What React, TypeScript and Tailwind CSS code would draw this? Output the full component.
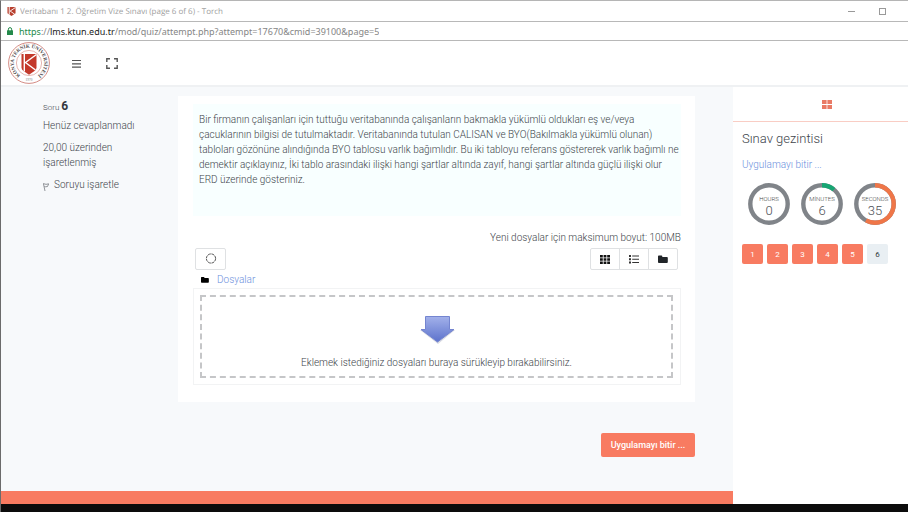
import type { ReactNode } from "react";

const QUESTIONS = [1, 2, 3, 4, 5, 6];

function Shield({ className }: { className: string }) {
  return (
    <svg viewBox="0 0 20 20" className={className} aria-hidden="true">
      <path d="M1 0h18v14l-9 6-9-6z" fill="#b8402f" />
      <path d="M5 0v17M19 1 7 9l10 7" stroke="#fff" strokeWidth="2" fill="none" />
    </svg>
  );
}

function UniversityLogo() {
  return (
    <svg viewBox="0 0 44 44" className="size-11" role="img" aria-label="Konya Teknik Üniversitesi">
      <circle cx="22" cy="22" r="20.4" fill="#fff" stroke="#d58d86" strokeWidth="1" />
      <circle cx="22" cy="22" r="12.6" fill="none" stroke="#dfa29c" strokeWidth="0.8" />
      <defs>
        <path id="seal-inner" d="M13.500 34.600A15.200 15.200 0 1 1 30.500 34.600" />
      </defs>
      <text fontSize="5" fontWeight="700" fill="#4c4648" fontFamily="Liberation Serif, serif">
        <textPath href="#seal-inner" startOffset="50%" textAnchor="middle">
          KONYA TEKNİK ÜNİVERSİTESİ
        </textPath>
      </text>
      <text x="22" y="40" fontSize="3.4" textAnchor="middle" fill="#777" fontFamily="Liberation Serif, serif">
        1970
      </text>
      <path d="M14.500 13h15v13.500q0 2.200-2 3.600l-5.500 3.600-5.500-3.600q-2-1.400-2-3.600z" fill="#c3392b" />
      <path d="M17.300 13v17.500M29.500 13.500 18.500 21.500 28.500 29" stroke="#fff" strokeWidth="1.400" fill="none" />
    </svg>
  );
}

function Folder({ className }: { className: string }) {
  return (
    <svg viewBox="0 0 10 9" className={className} fill="currentColor" aria-hidden="true">
      <path d="M0 1.400Q0 .6.8.6h2.700q.8 0 .8.800v.5h4.600q.9 0 .9.900v4.300q0 .9-.9.900H.9Q0 8 0 7.100z" />
    </svg>
  );
}

function Dial({ label, value, share, color }: { label: string; value: number; share: number; color: string }) {
  return (
    <svg viewBox="0 0 42 42" className="size-[42px]" role="img" aria-label={`${value} ${label}`}>
      <circle cx="21" cy="21" r="18.700" fill="none" stroke="#808489" strokeWidth="4.400" />
      <circle
        cx="21"
        cy="21"
        r="18.700"
        fill="none"
        stroke={color}
        strokeWidth="4.400"
        pathLength="100"
        strokeDasharray={`${share} 100`}
        transform="rotate(-90 21 21)"
      />
      <text x="21" y="18" fontSize="6" textAnchor="middle" fill="#444">
        {label}
      </text>
      <text x="21" y="32" fontSize="13" textAnchor="middle" fill="#4c5056">
        {value}
      </text>
    </svg>
  );
}

function ViewButton({ label, children }: { label: string; children: ReactNode }) {
  return (
    <button
      aria-label={label}
      className="flex h-[22px] w-[30px] -ml-px items-center justify-center border border-[#dfe1e3] bg-white text-[#212529] first:rounded-l-xs last:rounded-r-xs"
    >
      {children}
    </button>
  );
}

export default function App() {
  return (
    <div className="flex min-h-screen flex-col border-t border-l border-t-[#b5b5b5] border-l-[#6b6b6b] bg-white font-['Roboto',sans-serif] text-[10px] leading-[15px] font-light text-[#40454b]">
      <div className="flex h-5 items-center border-b border-[#b8b8b8] pr-[22px] pl-1.5 box-content font-['Open_Sans',sans-serif] text-[8px] font-normal text-[#a0a0a0] [text-rendering:geometricPrecision]">
        <Shield className="mr-1 size-[9px]" />
        <span className="flex-1 truncate">Veritabanı 1 2. Öğretim Vize Sınavı (page 6 of 6) - Torch</span>
        <button aria-label="Simge durumuna küçült" className="mr-6 flex size-[7px] items-center">
          <span className="w-full border-t border-[#999]" />
        </button>
        <button aria-label="Ekranı kapla" className="size-[7px] border border-[#999]" />
      </div>

      <div className="box-content flex h-[18px] items-center border-b border-[#b8b8b8] pl-1.5 font-['Noto_Sans',sans-serif] text-[9px] font-normal text-[#858585]">
        <svg viewBox="0 0 6 8" className="mr-1.5 h-2 w-1.5" aria-hidden="true">
          <path d="M1.400 4V2.200a1.600 1.600 0 0 1 3.200 0V4" fill="none" stroke="#248a4b" strokeWidth="1" />
          <path d="M0 3.300h6V8H0z" fill="#248a4b" />
        </svg>
        <span className="truncate">
          <span className="text-[#248a4b]">https</span>://<span className="text-[#222]">lms.ktun.edu.tr</span>
          /mod/quiz/attempt.php?attempt=17670&amp;cmid=39100&amp;page=5
        </span>
      </div>

      <header className="flex h-[46px] items-center border-b-2 border-[#eff1f3] pl-1.5">
        <UniversityLogo />
        <button aria-label="Menü" className="ml-[21px]">
          <svg viewBox="0 0 9 9" className="size-[9px]" stroke="#555" strokeWidth="1.200" aria-hidden="true">
            <path d="M0 1.500h9M0 4.800h9M0 8.100h9" />
          </svg>
        </button>
        <button aria-label="Tam ekran" className="ml-[25px]">
          <svg viewBox="0 0 12 11" className="h-[11px] w-3" fill="none" stroke="#555" strokeWidth="1.400" aria-hidden="true">
            <path d="M4 .8H.8V4M8 .8h3.200V4M.8 7v3.200H4M11.200 7v3.200H8" />
          </svg>
        </button>
      </header>

      <div className="flex flex-1">
        <div className="flex min-w-0 flex-1 flex-col bg-[#f7f9fb]">
          <main className="flex flex-1 flex-col pt-[9px] pr-[38px] pl-[42px]">
            <div className="flex items-start">
              <section className="w-[135px] shrink-0 pt-[3px]">
                <h3 className="text-[8px]">
                  Soru <span className="text-[12px] font-bold text-[#343a40]">6</span>
                </h3>
                <p className="mt-[3px]">Henüz cevaplanmadı</p>
                <p className="mt-[7px] w-24">20,00 üzerinden işaretlenmiş</p>
                <button className="mt-[7px] flex items-center">
                  <svg viewBox="0 0 6 8" className="mt-1 mr-[5px] h-2 w-1.5" fill="none" stroke="#777b80" strokeWidth=".8" aria-hidden="true">
                    <path d="M.4.500 2 8M.4.600Q3 2 5.700.800L4.500 3.500Q2.500 4 1.300 3.600" />
                  </svg>
                  Soruyu işaretle
                </button>
              </section>

              <section className="min-w-0 flex-1 bg-white pt-2 pr-3.5 pb-[17px] pl-[15px]">
                <div className="min-h-28 bg-[#f8ffff] pt-2 pl-1.5">
                  <p>
                    Bir firmanın çalışanları için tuttuğu veritabanında çalışanların bakmakla yükümlü oldukları eş
                    ve/veya çacuklarının bilgisi de tutulmaktadır. Veritabanında tutulan CALISAN ve BYO(Bakılmakla
                    yükümlü olunan) tabloları gözönüne alındığında BYO tablosu varlık bağımlıdır. Bu iki tabloyu
                    referans göstererek varlık bağımlı ne demektir açıklayınız, İki tablo arasındaki ilişki hangi
                    şartlar altında zayıf, hangi şartlar altında güçlü ilişki olur ERD üzerinde gösteriniz.
                  </p>
                </div>
                <p className="mt-3.5 text-right">Yeni dosyalar için maksimum boyut: 100MB</p>
                <div className="mt-[3px] flex justify-between pr-[3px] pl-0.5">
                  <button
                    aria-label="Yenile"
                    className="flex h-[22px] w-[31px] items-center justify-center rounded-xs border border-[#dfe1e3] bg-white"
                  >
                    <svg viewBox="0 0 12 12" className="size-3" fill="none" stroke="#444" aria-hidden="true">
                      <circle cx="6" cy="5.500" r="4.600" strokeWidth=".9" strokeDasharray="2.900 .7" />
                    </svg>
                  </button>
                  <div className="flex">
                    <ViewButton label="Simgeler">
                      <svg viewBox="0 0 10 9" className="h-[9px] w-2.5" fill="#111" aria-hidden="true">
                        <path d="M0 0h2.800v2.500H0zM3.600 0h2.800v2.500H3.600zM7.200 0H10v2.500H7.200zM0 3.200h2.800v2.500H0zM3.600 3.200h2.800v2.500H3.600zM7.200 3.200H10v2.500H7.200zM0 6.400h2.800v2.500H0zM3.600 6.400h2.800v2.500H3.600zM7.200 6.400H10v2.500H7.200z" />
                      </svg>
                    </ViewButton>
                    <ViewButton label="Liste">
                      <svg viewBox="0 0 10 9" className="h-[9px] w-2.5" fill="#333" aria-hidden="true">
                        <path d="M0 0h2v2H0zM3.200.5H10v1.100H3.200zM0 3.200h2v2H0zM3.200 3.700H10v1.100H3.200zM0 6.400h2v2H0zM3.200 6.900H10V8H3.200z" />
                      </svg>
                    </ViewButton>
                    <ViewButton label="Klasörler">
                      <Folder className="h-[9px] w-2.5" />
                    </ViewButton>
                  </div>
                </div>
                <div className="mt-0.5 flex items-center pl-2">
                  <Folder className="mr-2 h-2 w-2 text-black" />
                  <a href="#dosyalar" className="text-[#6c90dd]">
                    Dosyalar
                  </a>
                </div>
                <div id="dosyalar" className="mt-px border border-[#f2f3f4] p-1.5 pr-[7px]">
                  <div className="flex h-[83px] flex-col items-center border-2 border-dashed border-[#c5c6c8] pt-[18px]">
                    <svg viewBox="0 0 36 30" className="h-[30px] w-9" aria-hidden="true">
                      <defs>
                        <linearGradient id="arrow" x1="0" y1="0" x2="0" y2="1">
                          <stop offset="0" stopColor="#a3b1ea" />
                          <stop offset="1" stopColor="#5c72cc" />
                        </linearGradient>
                      </defs>
                      <path d="M6 2h25v13h5L19 29 1 15h5z" fill="#d9dbe3" />
                      <path d="M6.500 1.500h24v13h4.500L18.500 27 2 14.500h4.500z" fill="url(#arrow)" stroke="#7485d0" />
                    </svg>
                    <p className="mt-2.5">Eklemek istediğiniz dosyaları buraya sürükleyip bırakabilirsiniz.</p>
                  </div>
                </div>
              </section>
            </div>

            <button className="mt-[31px] mb-8 h-6 w-[94px] self-end rounded-xs bg-[#f87b61] text-[9px] font-medium text-white">
              Uygulamayı bitir ...
            </button>
          </main>
          <footer className="h-[13px] bg-[#f87b61]" />
        </div>

        <aside className="w-[175px] shrink-0 bg-white">
          <div className="flex h-[35px] items-center justify-center border-b border-[#f9cdc4] pl-3">
            <button aria-label="Bloklar">
              <svg viewBox="0 0 10 9" className="h-[9px] w-2.5" fill="#e97a65" aria-hidden="true">
                <path d="M0 0h4.600v4.100H0zM5.400 0H10v4.100H5.400zM0 4.900h4.600V9H0zM5.400 4.900H10V9H5.400z" />
              </svg>
            </button>
          </div>
          <div className="pt-[9px] pl-[9px]">
            <h2 className="text-[13px]">Sınav gezintisi</h2>
            <a href="#bitir" className="mt-[11px] block text-[#6c90dd]">
              Uygulamayı bitir ...
            </a>
            <div className="mt-[11px] flex gap-[11px] pl-1.5">
              <Dial label="HOURS" value={0} share={0} color="#808489" />
              <Dial label="MİNUTES" value={6} share={11} color="#16a673" />
              <Dial label="SECONDS" value={35} share={58} color="#ef7648" />
            </div>
            <nav aria-label="Sınav gezintisi" className="mt-[19px] flex gap-1">
              {QUESTIONS.map((n) => (
                <a
                  key={n}
                  href={`#soru-${n}`}
                  className={`flex h-5 w-[21px] items-center justify-center rounded-xs text-[8px] font-normal ${
                    n === 6 ? "bg-[#e9eff3] text-[#343a40]" : "bg-[#f87b61] text-white"
                  }`}
                >
                  {n}
                </a>
              ))}
            </nav>
          </div>
        </aside>
      </div>
      <div className="h-2 bg-[#0c0c0c]" />
    </div>
  );
}
